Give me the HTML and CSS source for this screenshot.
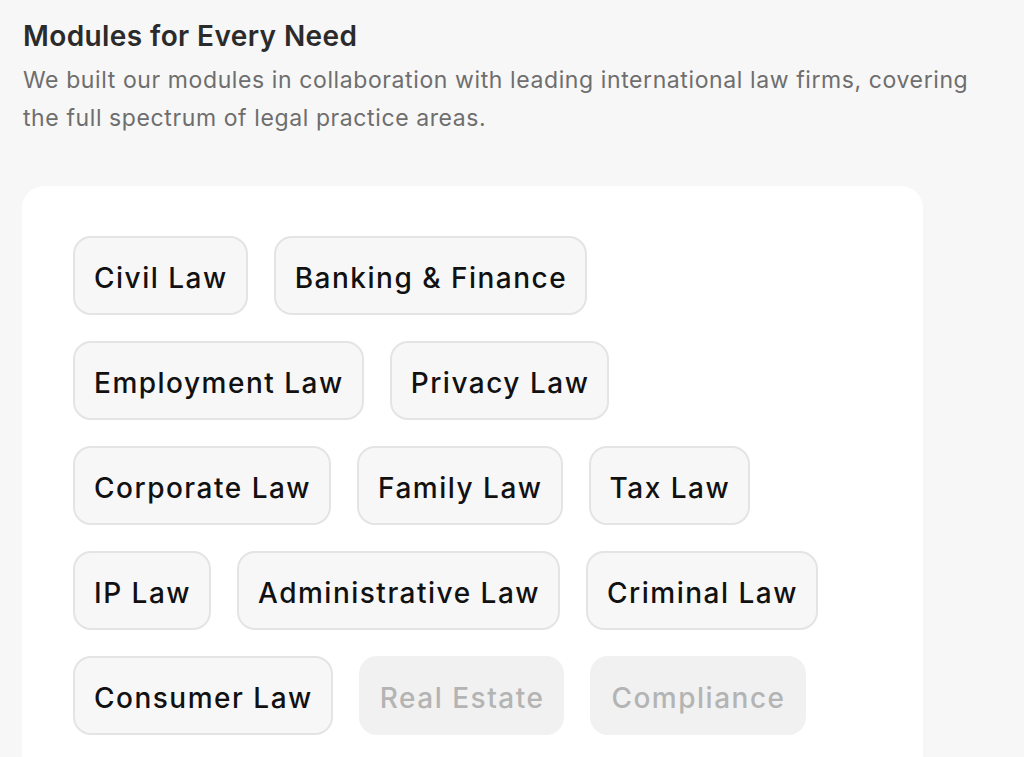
FILE: index.html
```html
<!DOCTYPE html>
<html lang="en">
<head>
<meta charset="utf-8">
<title>Modules for Every Need</title>
<link rel="stylesheet" href="styles.css">
</head>
<body>
<section class="modules">
  <h2 class="title">Modules for Every Need</h2>
  <p class="lead">We built our modules in collaboration with leading international law firms, covering the full spectrum of legal practice areas.</p>
  <div class="card">
    <div class="chip-row">
      <span class="chip">Civil Law</span>
      <span class="chip">Banking &amp; Finance</span>
    </div>
    <div class="chip-row">
      <span class="chip">Employment Law</span>
      <span class="chip">Privacy Law</span>
    </div>
    <div class="chip-row">
      <span class="chip">Corporate Law</span>
      <span class="chip">Family Law</span>
      <span class="chip">Tax Law</span>
    </div>
    <div class="chip-row">
      <span class="chip">IP Law</span>
      <span class="chip">Administrative Law</span>
      <span class="chip">Criminal Law</span>
    </div>
    <div class="chip-row">
      <span class="chip">Consumer Law</span>
      <span class="chip chip-off">Real Estate</span>
      <span class="chip chip-off">Compliance</span>
    </div>
  </div>
</section>
</body>
</html>
```
FILE: styles.css
```css
html, body {
  margin: 0;
  padding: 0;
  background: #f7f7f7;
  height: 757px;
  overflow: hidden;
}
body {
  font-family: Inter, "Noto Sans", sans-serif;
  color: #222;
}
.modules {
  padding: 18px 30px 0 22px;
}
.title {
  margin: 0 0 0 1px;
  font-size: 28px;
  line-height: 36px;
  font-weight: 600;
  color: #2b2b2b;
  letter-spacing: 0.4px;
}
.lead {
  margin: 7px 0 0 1px;
  font-size: 23px;
  line-height: 38px;
  color: #6e6e6e;
  letter-spacing: 0.6px;
}
.card {
  margin: 49px 71px 0 0;
  background: #fff;
  border-radius: 22px;
  padding: 50px 51px 60px;
  display: flex;
  flex-direction: column;
  gap: 26px;
  min-height: 600px;
}
.chip-row {
  display: flex;
  gap: 26px;
}
.chip {
  height: 79px;
  box-sizing: border-box;
  display: flex;
  align-items: center;
  padding: 5px 18px 0 19px;
  border: 2px solid #e4e4e4;
  border-radius: 18px;
  background: #f7f7f7;
  font-size: 28px;
  font-weight: 500;
  color: #111;
  letter-spacing: 1.5px;
  white-space: nowrap;
}
.chip-off {
  background: #f1f1f1;
  border-color: #f1f1f1;
  color: #b4b4b4;
}
```
